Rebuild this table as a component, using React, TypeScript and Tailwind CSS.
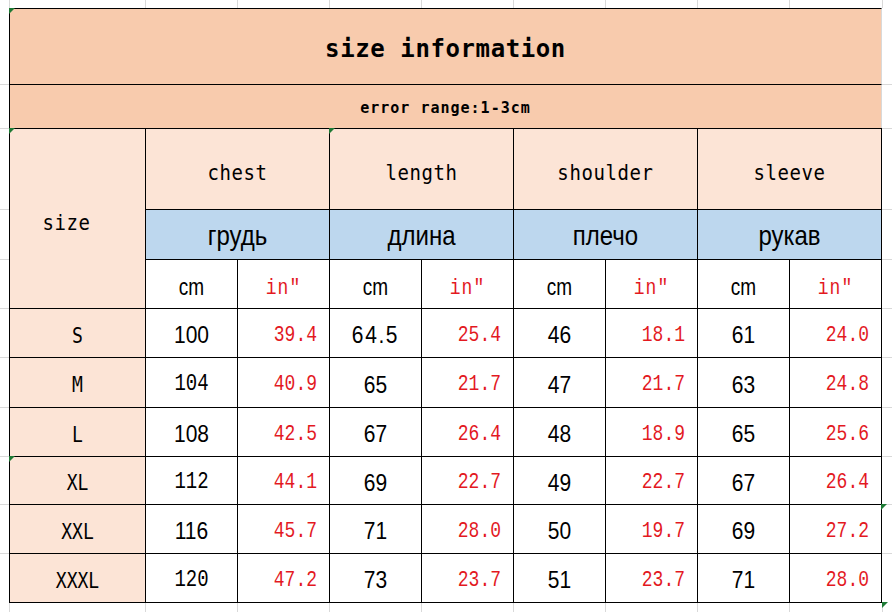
import React from "react";

const MONO = "font-['DejaVu_Sans_Mono',monospace]";
const SANS = "font-['Liberation_Sans',Arial,sans-serif]";
const LMONO = "font-['Liberation_Mono',monospace]";
const RED = "text-[#e3191f]";

type Row = { size: string; vals: string[]; thin?: boolean };

const rows: Row[] = [
  { size: "S", vals: ["100", "39.4", "64.5", "25.4", "46", "18.1", "61", "24.0"] },
  { size: "M", vals: ["104", "40.9", "65", "21.7", "47", "21.7", "63", "24.8"], thin: true },
  { size: "L", vals: ["108", "42.5", "67", "26.4", "48", "18.9", "65", "25.6"] },
  { size: "XL", vals: ["112", "44.1", "69", "22.7", "49", "22.7", "67", "26.4"], thin: true },
  { size: "XXL", vals: ["116", "45.7", "71", "28.0", "50", "19.7", "69", "27.2"] },
  { size: "XXXL", vals: ["120", "47.2", "73", "23.7", "51", "23.7", "71", "28.0"], thin: true },
];

function Tri() {
  return (
    <svg className="absolute -left-px -top-px" width="6" height="6" viewBox="0 0 6 6">
      <polygon points="0,0 6,0 0,6" fill="#1e7a35" />
    </svg>
  );
}

const CELL = "relative flex items-center justify-center border-l border-t border-black";

export default function App() {
  const topMargin = Array.from({ length: 11 }, (_, i) => (
    <div key={"t" + i} className={i === 0 ? "" : "border-l border-[#d9d9d9]"} />
  ));
  const bottomMargin = Array.from({ length: 11 }, (_, i) => (
    <div key={"b" + i} className={i === 0 ? "relative" : "relative border-l border-[#d9d9d9]"}>
      {i === 10 && <Tri />}
    </div>
  ));
  const LeftM = ({ first }: { first?: boolean }) => (
    <div className={first ? "" : "border-t border-[#d9d9d9]"} />
  );
  const RightM = ({ first, tri }: { first?: boolean; tri?: boolean }) => (
    <div className={first ? "relative" : "relative border-t border-[#d9d9d9]"}>{tri && <Tri />}</div>
  );

  const headers = [
    { en: "chest", ru: "грудь" },
    { en: "length", ru: "длина" },
    { en: "shoulder", ru: "плечо" },
    { en: "sleeve", ru: "рукав" },
  ];

  return (
    <div className="h-[612px] w-[892px] overflow-hidden bg-white text-black">
      <div className="grid grid-cols-[9px_136px_92px_92px_92px_92px_92px_92px_92px_93px_10px] grid-rows-[8px_76px_44px_81px_50px_49px_49px_50px_49px_48px_49px_50px_9px]">
        {topMargin}

        {/* title */}
        <LeftM first />
        <div className={`${CELL} col-span-9 border-r border-r-[#d9d9d9] bg-[#f8cbad] pt-1`}>
          <Tri />
          <span className={`${MONO} text-[24px] font-bold tracking-[0.6px]`}>size information</span>
        </div>
        <RightM first />

        {/* error range */}
        <LeftM />
        <div className={`${CELL} col-span-9 border-r border-r-[#d9d9d9] bg-[#f8cbad] pt-1`}>
          <span className={`${MONO} text-[15px] font-bold tracking-[1px]`}>error range:1-3cm</span>
        </div>
        <RightM />

        {/* english header row */}
        <LeftM />
        <div className={`${CELL} row-span-3 bg-[#fce4d6] pr-[22px] pt-2`}>
          <Tri />
          <span className={`${MONO} scale-y-[1.08] text-[19px] tracking-[0.5px]`}>size</span>
        </div>
        {headers.map((h, i) => (
          <div
            key={h.en}
            className={`${CELL} col-span-2 bg-[#fce4d6] pt-[6px] ${i === 3 ? "border-r" : ""}`}
          >
            {i === 1 && <Tri />}
            <span className={`${MONO} scale-y-[1.08] text-[19px] tracking-[0.6px]`}>{h.en}</span>
          </div>
        ))}
        <RightM />

        {/* russian header row */}
        <LeftM />
        {headers.map((h, i) => (
          <div key={h.ru} className={`${CELL} col-span-2 bg-[#bdd7ee] pt-[3px] ${i === 3 ? "border-r" : ""}`}>
            <span className={`${SANS} scale-y-[1.12] text-[24px]`}>{h.ru}</span>
          </div>
        ))}
        <RightM />

        {/* units row */}
        <LeftM />
        {headers.map((h, i) => (
          <React.Fragment key={"u" + h.en}>
            <div className={`${CELL} bg-white pt-[8px]`}>
              <span className={`${SANS} scale-y-[1.25] text-[19px]`}>cm</span>
            </div>
            <div className={`${CELL} bg-white pt-[8px] ${i === 3 ? "border-r" : ""}`}>
              <span className={`${LMONO} ${RED} scale-y-[1.2] text-[18px] tracking-[1px]`}>in"</span>
            </div>
          </React.Fragment>
        ))}
        <RightM />

        {/* data rows */}
        {rows.map((r, ri) => {
          const last = ri === rows.length - 1;
          return (
            <React.Fragment key={r.size}>
              <LeftM />
              <div className={`${CELL} bg-[#fce4d6] pt-1 ${last ? "border-b" : ""}`}>
                {r.size === "XL" && <Tri />}
                <span className={`${MONO} scale-y-[1.15] text-[18px]`}>{r.size}</span>
              </div>
              {r.vals.map((v, vi) => {
                const isIn = vi % 2 === 1;
                const lastCol = vi === 7;
                const cls = `${CELL} bg-white pt-1 ${last ? "border-b" : ""} ${lastCol ? "border-r" : ""} ${
                  isIn ? "justify-end pr-[12px]" : ""
                }`;
                let span;
                if (isIn) {
                  span = <span className={`${LMONO} ${RED} scale-y-[1.25] text-[18px]`}>{v}</span>;
                } else if (vi === 0 && r.thin) {
                  span = <span className={`${LMONO} scale-y-[1.3] text-[19px]`}>{v}</span>;
                } else if (v === "64.5") {
                  span = <span className={`${SANS} scale-y-[1.1] text-[21px] tracking-[1.6px]`}>{v}</span>;
                } else {
                  span = <span className={`${SANS} scale-y-[1.1] text-[21px]`}>{v}</span>;
                }
                return (
                  <div key={vi} className={cls}>
                    {span}
                  </div>
                );
              })}
              <RightM tri={r.size === "XXL"} />
            </React.Fragment>
          );
        })}

        {bottomMargin}
      </div>
    </div>
  );
}
